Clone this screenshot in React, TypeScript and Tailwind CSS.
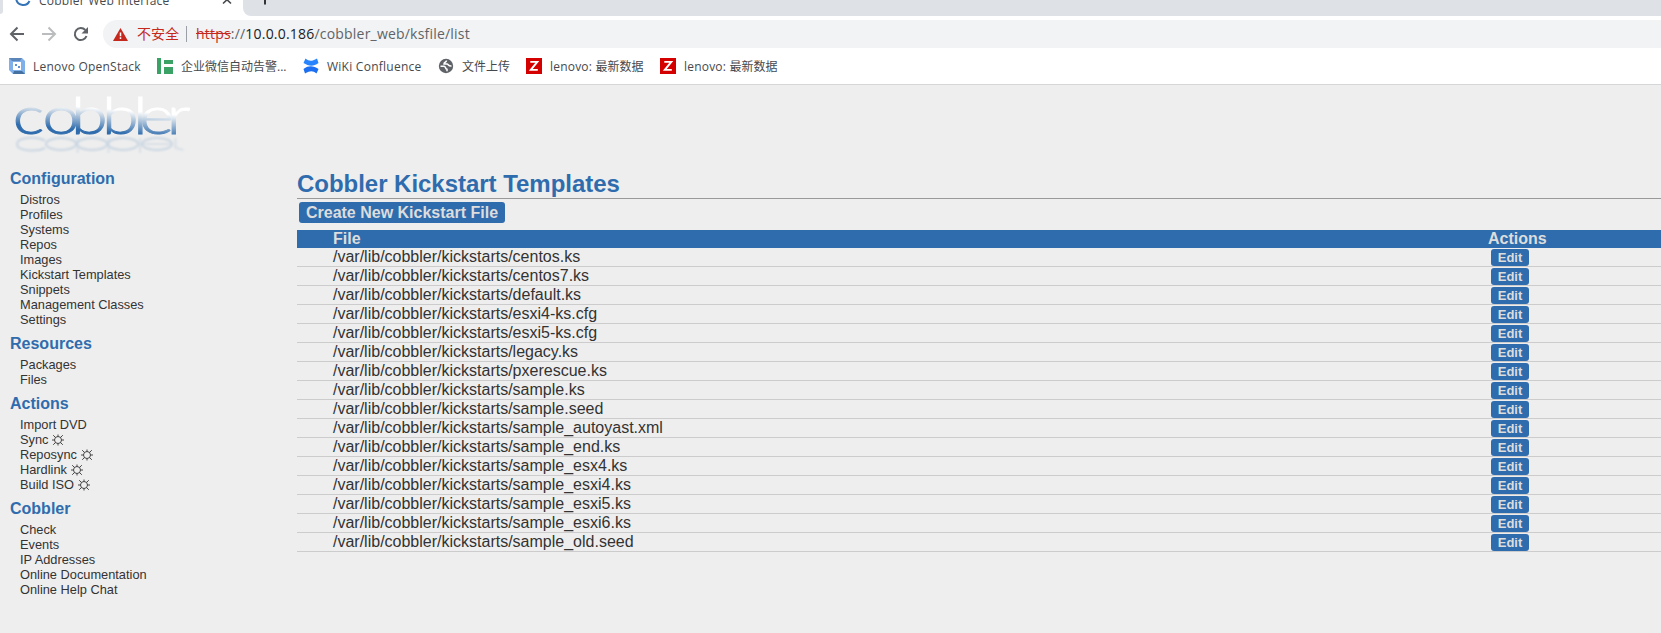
import React from "react";

const groups = [
  { title: "Configuration", items: ["Distros", "Profiles", "Systems", "Repos", "Images", "Kickstart Templates", "Snippets", "Management Classes", "Settings"] },
  { title: "Resources", items: ["Packages", "Files"] },
  { title: "Actions", items: ["Import DVD", "Sync ☼", "Reposync ☼", "Hardlink ☼", "Build ISO ☼"] },
  { title: "Cobbler", items: ["Check", "Events", "IP Addresses", "Online Documentation", "Online Help Chat"] },
];

const files = [
  "centos.ks", "centos7.ks", "default.ks", "esxi4-ks.cfg", "esxi5-ks.cfg", "legacy.ks", "pxerescue.ks", "sample.ks",
  "sample.seed", "sample_autoyast.xml", "sample_end.ks", "sample_esx4.ks", "sample_esxi4.ks", "sample_esxi5.ks",
  "sample_esxi6.ks", "sample_old.seed",
];

function Sun() {
  return (
    <svg className="ml-1 inline-block h-3 w-3 align-[-2px]" viewBox="0 0 12 12" fill="none" stroke="#333" strokeWidth="0.9">
      <circle cx="6" cy="6" r="3.5" />
      <path d="M6 .5v2M6 9.500v2M0 6h2.500M9.500 6H12M1.200 1.200l2.200 2.200M8.600 8.600l2.200 2.200M10.800 1.200L8.600 3.400M3.400 8.600l-2.200 2.200" />
    </svg>
  );
}

function Logo() {
  return (
    <svg className="block h-[75px] w-[220px] shrink-0" viewBox="0 85 220 75" fontFamily="Lato, 'Liberation Sans', sans-serif" fontWeight="300" fontSize="52">
      <defs>
        <linearGradient id="word" gradientUnits="userSpaceOnUse" x1="76" y1="108" x2="73.5" y2="131">
          <stop offset="0" stopColor="#ffffff" />
          <stop offset="0.3" stopColor="#c3d3e3" />
          <stop offset="1" stopColor="#2f6cad" />
        </linearGradient>
        <filter id="soft"><feGaussianBlur stdDeviation="0.9" /></filter>
      </defs>
      <g transform="scale(1.28 1)">
        <text x="10 33.3 55.5 79.7 104 108.700 130.300" y="134.300" fill="url(#word)" stroke="url(#word)" strokeWidth="0.9">cobbler</text>
      </g>
      <g fill="none" stroke="#c9d5e1" strokeWidth="2" filter="url(#soft)">
        <path d="M45 140.500C36 136 17 137 17 144s19 8.500 28 4" />
        <ellipse cx="61" cy="144" rx="15" ry="6" />
        <ellipse cx="92" cy="144" rx="15" ry="6" />
        <ellipse cx="123" cy="144" rx="15" ry="6" />
        <ellipse cx="157" cy="144" rx="15" ry="6" />
        <path d="M142 144h30M77.500 138v15M108.500 138v15M140 138v15M175.500 138v10l8 2" strokeOpacity="0.6" />
      </g>
    </svg>
  );
}

function Zabbix() {
  return (
    <svg className="h-4 w-4 shrink-0" viewBox="0 0 16 16">
      <path fill="#d40000" d="M0 0h16v16H0z" />
      <path d="M4.300 3.900h7L4.800 11.900h7" fill="none" stroke="#fff" strokeWidth="1.900" />
    </svg>
  );
}

function Browser() {
  return (
    <header className="h-[85px] shrink-0 border-b border-[#d5d6d8] bg-white font-['Open_Sans','Noto_Sans_CJK_SC',sans-serif]">
      <div className="flex h-4 bg-white">
        <div className="h-[14px] w-[3px] shrink-0 rounded-br-[3px] bg-[#dee1e6]" />
        <div className="flex h-4 w-60 shrink-0 items-end bg-white">
          <svg className="ml-3 h-4 w-4 shrink-0" viewBox="0 0 16 16">
            <path d="M1.200-2A7 7 0 0 0 14.500 1" fill="none" stroke="#3574b8" strokeWidth="2" />
          </svg>
          <span className="ml-[8px] h-4 w-[168px] shrink-0 whitespace-nowrap text-[12px] leading-[1px] tracking-[0.25px] text-[#45494d]">Cobbler Web Interface</span>
          <svg className="ml-[12px] h-4 w-4 shrink-0" viewBox="0 0 16 16">
            <path d="M4-4l8 7.500M12-4L4 3.500" stroke="#45494d" strokeWidth="1.600" />
          </svg>
        </div>
        <div className="flex-1 rounded-bl-lg bg-[#dee1e6]">
          <svg className="ml-[13px] h-4 w-4" viewBox="0 0 16 16"><path d="M9 0v4.500" stroke="#333" strokeWidth="2" /></svg>
        </div>
      </div>
      <div className="flex h-9 items-center">
        <svg className="h-9 w-[103px] shrink-0" viewBox="0 0 103 36" fill="none" strokeWidth="2">
          <path d="M24 18H11M17.500 11.500L11 18l6.500 6.500" stroke="#5f6368" />
          <path d="M42 18h13M48.500 11.500L55 18l-6.500 6.500" stroke="#babcbe" />
          <path d="M86.500 20A6 6 0 1 1 85.300 14" stroke="#5f6368" />
          <path d="M88 11v6.500h-6.500z" fill="#5f6368" />
        </svg>
        <div className="flex h-7 flex-1 items-center rounded-l-full bg-[#f1f3f4] pl-[10px]">
          <svg className="h-[13px] w-[15px]" viewBox="0 0 15 13"><path d="M7.500 0L15 13H0z" fill="#c5281c" /><path d="M7.500 4.500V8.300M7.500 9.300V11" stroke="#fff" strokeWidth="1.500" /></svg>
          <span className="ml-[9px] w-[42px] whitespace-nowrap text-[14px] leading-5 text-[#c5281c]">不安全</span>
          <span className="ml-[7px] mr-[9px] h-4 w-px bg-[#9aa0a6]" />
          <span className="whitespace-nowrap text-[14px] leading-5 tracking-[0.2px] text-[#5f6368]"><span className="text-[#c5281c] line-through">https</span>://<span className="text-[#202124]">10.0.0.186</span>/cobbler_web/ksfile/list</span>
        </div>
      </div>
      <nav className="flex h-[28px] items-center whitespace-nowrap text-[12px] leading-4 text-[#45494d]">
        <div className="flex w-[148px] items-center pl-[9px]">
          <svg className="h-4 w-4 shrink-0" viewBox="0 0 16 16"><path d="M0 0h13l3 3v13H4l-4-4z" fill="#7fb0ea" /><path d="M0 0h13l-2 3H3z" fill="#5d86b8" /><path d="M4 16l1-3h8l3 3z" fill="#44719f" /><path d="M4 4h8v8H4z" fill="#fff" /><path d="M6 6h2v2H6zM9 8h2v2H9z" fill="#5d93d4" /></svg>
          <span className="ml-2 pt-[2px] tracking-[0.22px]">Lenovo OpenStack</span>
        </div>
        <div className="flex w-[146px] items-center pl-[9px]">
          <svg className="h-4 w-4 shrink-0" viewBox="0 0 16 16"><path d="M0 0h4v16H0zM7 2h9v4H7zM7 9h9v7H7z" fill="#3ba266" /></svg>
          <span className="ml-2 pt-[2px]">企业微信自动告警...</span>
        </div>
        <div className="flex w-[136px] items-center pl-[9px]">
          <svg className="h-4 w-4 shrink-0" viewBox="0 0 16 16"><path d="M2.500.5C6 3 8 4 14 .5l1.500 4.500C10 9 5.500 8 .5 5z" fill="#2684ff" /><path d="M13.500 15.500C10 13 8 12 2 15.500L.5 11C6 7 10.500 8 15.500 11z" fill="#1c6ff0" /></svg>
          <span className="ml-2 pt-[2px] tracking-[0.25px]">WiKi Confluence</span>
        </div>
        <div className="flex w-[86px] items-center pl-[8px]">
          <svg className="h-4 w-4 shrink-0" viewBox="0 0 16 16"><circle cx="8" cy="8" r="7.200" fill="#5f6368" /><path d="M2.500 8.300h3.500c2 0 1 2.500 3 3v2M8.500 2.500c0 2-2.500 1.500-2.500 3.500h3c1.500 0 1 2.300 4.500 2" stroke="#fff" strokeWidth="1.500" fill="none" /></svg>
          <span className="ml-2 pt-[2px]">文件上传</span>
        </div>
        <div className="flex w-[134px] items-center pl-[10px]"><Zabbix /><span className="ml-2 pt-[2px]"><span className="tracking-[0.2px]">lenovo: </span>最新数据</span></div>
        <div className="flex items-center pl-[10px]"><Zabbix /><span className="ml-2 pt-[2px]"><span className="tracking-[0.2px]">lenovo: </span>最新数据</span></div>
      </nav>
    </header>
  );
}

export default function App() {
  return (
    <div className="flex h-[633px] w-full flex-col overflow-hidden bg-[#eee] font-['Liberation_Sans',Arial,sans-serif] text-[#333]">
      <Browser />
      <div className="flex flex-1">
        <aside className="w-[297px] shrink-0">
          <Logo />
          <nav className="pl-[10px] pt-[10px]">
            {groups.map((g) => (
              <section key={g.title} className="mb-[8px]">
                <h2 className="mb-[4px] text-[16px] font-bold leading-[18px] text-[#2f6cad]">{g.title}</h2>
                <ul className="pl-[10px] text-[12.8px]">
                  {g.items.map((item) => (
                    <li key={item} className="h-[15px] leading-[15px]">{item.replace(" ☼", "")}{item.includes("☼") && <Sun />}</li>
                  ))}
                </ul>
              </section>
            ))}
          </nav>
        </aside>
        <main className="min-w-0 flex-1 pt-[85px]">
          <h1 className="h-[29px] border-b border-[#999] text-[24px] font-bold leading-[28px] tracking-[-0.03px] text-[#2f6cad]">Cobbler Kickstart Templates</h1>
          <button className="ml-[2px] mt-[3px] block h-[21px] w-[206px] rounded-[3px] bg-[#2f6cad] text-[16px] font-bold leading-[21px] text-[#ddd]">Create New Kickstart File</button>
          <div className="mt-[7px] flex h-[18px] bg-[#2f6cad] pl-9 text-[16px] font-bold leading-[18px] text-[#ddd]">
            <span className="w-[1155px]">File</span>
            <span>Actions</span>
          </div>
          {files.map((f) => (
            <div key={f} className="flex h-[19px] border-b border-[#ccc] pl-9 text-[16px] leading-[18px]">
              <span className="w-[1158px]">/var/lib/cobbler/kickstarts/{f}</span>
              <button className="mt-px h-[17px] w-[38px] rounded-[3px] bg-[#2f6cad] text-[13px] font-bold leading-[17px] text-[#ddd]">Edit</button>
            </div>
          ))}
        </main>
      </div>
    </div>
  );
}
